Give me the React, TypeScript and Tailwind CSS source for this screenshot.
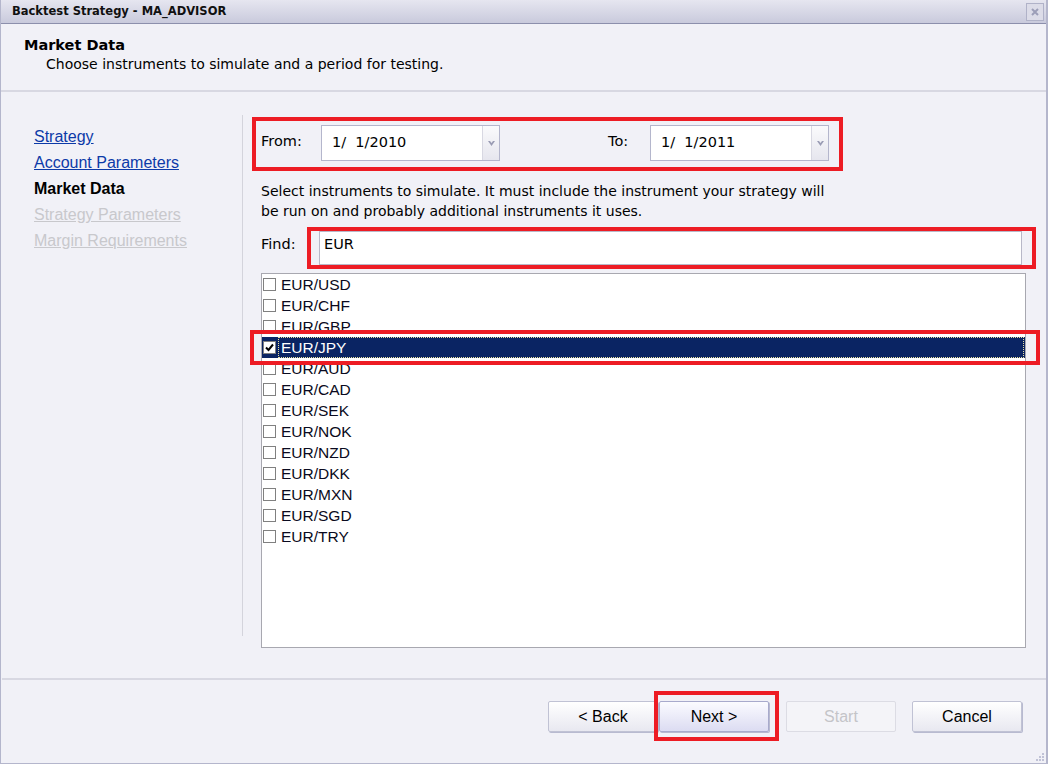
import React from "react";

const items = [
  "EUR/USD","EUR/CHF","EUR/GBP","EUR/JPY","EUR/AUD","EUR/CAD","EUR/SEK",
  "EUR/NOK","EUR/NZD","EUR/DKK","EUR/MXN","EUR/SGD","EUR/TRY",
];

const tahoma = { fontFamily: "'DejaVu Sans', Verdana, sans-serif" };

function Combo({ value }: { value: string }) {
  return (
    <div className="flex h-[36px] w-[179px] border border-[#b4b6cc] bg-white">
      <div className="flex flex-1 items-center whitespace-pre pl-[10px] text-[14.5px] text-black" style={tahoma}>{value}</div>
      <div className="flex w-[17px] items-center justify-center border-l border-[#d8d8e2] bg-gradient-to-b from-[#fafafc] to-[#e6e6ee]">
        <svg width="7" height="5" viewBox="0 0 7 5"><path d="M0 0h2l1.5 2L5 0h2L3.5 5z" fill="#9a9cb4" /></svg>
      </div>
    </div>
  );
}

function Btn({ children, disabled, active }: { children: React.ReactNode; disabled?: boolean; active?: boolean }) {
  return (
    <div
      className={
        "flex h-[31px] w-[110px] items-center justify-center rounded-[2px] border text-[16px] " +
        (disabled
          ? "border-[#dcdce4] bg-[#f4f4f8] text-[#c4c4c8]"
          : active
          ? "border-[#a8aacc] bg-gradient-to-b from-[#fbfbff] to-[#dcdcf2] text-black shadow-[1px_1px_0_#b8bad0]"
          : "border-[#c0c2d4] bg-gradient-to-b from-white to-[#e8e8f0] text-black shadow-[1px_1px_0_#b8bad0]")
      }
    >
      {children}
    </div>
  );
}

export default function App() {
  return (
    <div
      className="relative flex h-[764px] w-[1048px] flex-col border-l border-r-2 border-b border-[#b4b6cc] bg-[#f1f1f7] text-black"
      style={{ fontFamily: "'Liberation Sans', Arial, sans-serif" }}
    >
      {/* title bar */}
      <div className="flex h-[24px] items-center justify-between border-b border-[#8c8fac] bg-gradient-to-b from-[#e6e6f0] to-[#c9cadc] pl-[11px] pr-[2px]">
        <span className="text-[11.5px] font-bold text-[#101010]" style={tahoma}>
          Backtest Strategy - MA_ADVISOR
        </span>
        <div className="flex h-[18px] w-[18px] items-center justify-center border border-[#b0b2c8] bg-[#dcdce8]">
          <svg width="8" height="8" viewBox="0 0 8 8"><path d="M1 1l6 6M7 1L1 7" stroke="#9c9eb8" strokeWidth="2" /></svg>
        </div>
      </div>

      {/* header */}
      <div className="h-[68px] border-b-2 border-[#d8d8e2] pl-[23px] pt-[12px]" style={tahoma}>
        <div className="text-[14.5px] font-bold leading-[18px]">Market Data</div>
        <div className="pl-[22px] text-[14px] leading-[20px]">Choose instruments to simulate and a period for testing.</div>
      </div>

      {/* body */}
      <div className="flex h-[586px]">
        <div className="flex w-[242px] flex-col items-start pt-[23px]">
          <div className="flex h-[521px] w-full flex-col border-r border-[#d4d4dc] pl-[33px] pt-[9px] text-[16px] leading-[26px]">
            <span className="text-[#0c3aa8] underline">Strategy</span>
            <span className="text-[#0c3aa8] underline">Account Parameters</span>
            <span className="font-bold text-black">Market Data</span>
            <span className="text-[#c8c8cc] underline">Strategy Parameters</span>
            <span className="text-[#c8c8cc] underline">Margin Requirements</span>
          </div>
        </div>

        <div className="flex flex-col pl-[9px] pt-[25px]" style={tahoma}>
          {/* date row */}
          <div className="flex h-[54px] w-[591px] items-start border-4 border-[#ed1c24] pl-[5px] pt-[4px] text-[14.5px]">
            <span className="mt-[6px] w-[60px]">From:</span>
            <Combo value="1/  1/2010" />
            <span className="ml-[108px] mt-[6px] w-[42px]">To:</span>
            <Combo value="1/  1/2011" />
          </div>

          <div className="mt-[10px] pl-[9px] text-[14px] leading-[20px]">
            Select instruments to simulate. It must include the instrument your strategy will
            <br />
            be run on and probably additional instruments it uses.
          </div>

          <div className="mt-[6px] flex items-center pl-[9px]">
            <span className="mb-[6px] w-[46px] text-[14.5px]">Find:</span>
            <div className="flex h-[42px] w-[729px] items-center border-4 border-[#ed1c24] pl-[8px] pr-[10px]">
              <div className="flex h-[34px] w-full items-start border border-[#b8b8c8] bg-white pl-[4px] pt-[2px] text-[14.5px]">
                EUR
              </div>
            </div>
          </div>

          <div
            className="relative ml-[9px] mt-[4px] h-[375px] w-[765px] border border-[#a8a8b0] bg-white text-[15.5px]"
            style={{ fontFamily: "'Liberation Sans', Arial, sans-serif" }}
          >
            {items.map((it) => {
              const sel = it === "EUR/JPY";
              return (
                <div key={it} className={"flex h-[21px] items-center pr-[1px] " + (sel ? "bg-[#0a2463]" : "")}>
                  <div className="ml-[1px] flex h-[13px] w-[13px] items-center justify-center border border-[#808080] bg-white">
                    {sel && (
                      <svg width="11" height="11" viewBox="0 0 11 11"><path d="M2 5.5l2.5 2.5L9 2.5" stroke="#000" strokeWidth="2" fill="none" /></svg>
                    )}
                  </div>
                  {sel ? (
                    <div className="ml-[2px] flex h-[21px] flex-1 items-center border border-dotted border-[#e8e0a0] bg-[#0a2463] pl-[2px] text-white">
                      {it}
                    </div>
                  ) : (
                    <span className="ml-[5px] text-[#0a0a20]">{it}</span>
                  )}
                </div>
              );
            })}
          </div>
        </div>
      </div>

      {/* JPY highlight */}
      <div className="absolute left-[249px] top-[330px] h-[35px] w-[790px] border-4 border-[#ed1c24]" />
      {/* Next highlight */}
      <div className="absolute left-[653px] top-[691px] h-[50px] w-[125px] border-4 border-[#ed1c24]" />

      {/* footer */}
      <div className="ml-[1px] flex flex-1 items-start justify-end border-t-2 border-[#d8d8e2] pr-[24px] pt-[21px]">
        <Btn>&lt; Back</Btn>
        <div className="ml-[1px]"><Btn active>Next &gt;</Btn></div>
        <div className="ml-[17px]"><Btn disabled>Start</Btn></div>
        <div className="ml-[16px]"><Btn>Cancel</Btn></div>
      </div>

      {/* grip */}
      <svg className="absolute bottom-[2px] right-[2px]" width="8" height="8" viewBox="0 0 8 8">
        <g fill="#c0c2d6">
          <rect x="6" y="0" width="2" height="2" /><rect x="3" y="3" width="2" height="2" /><rect x="6" y="3" width="2" height="2" />
          <rect x="0" y="6" width="2" height="2" /><rect x="3" y="6" width="2" height="2" /><rect x="6" y="6" width="2" height="2" />
        </g>
      </svg>
    </div>
  );
}
